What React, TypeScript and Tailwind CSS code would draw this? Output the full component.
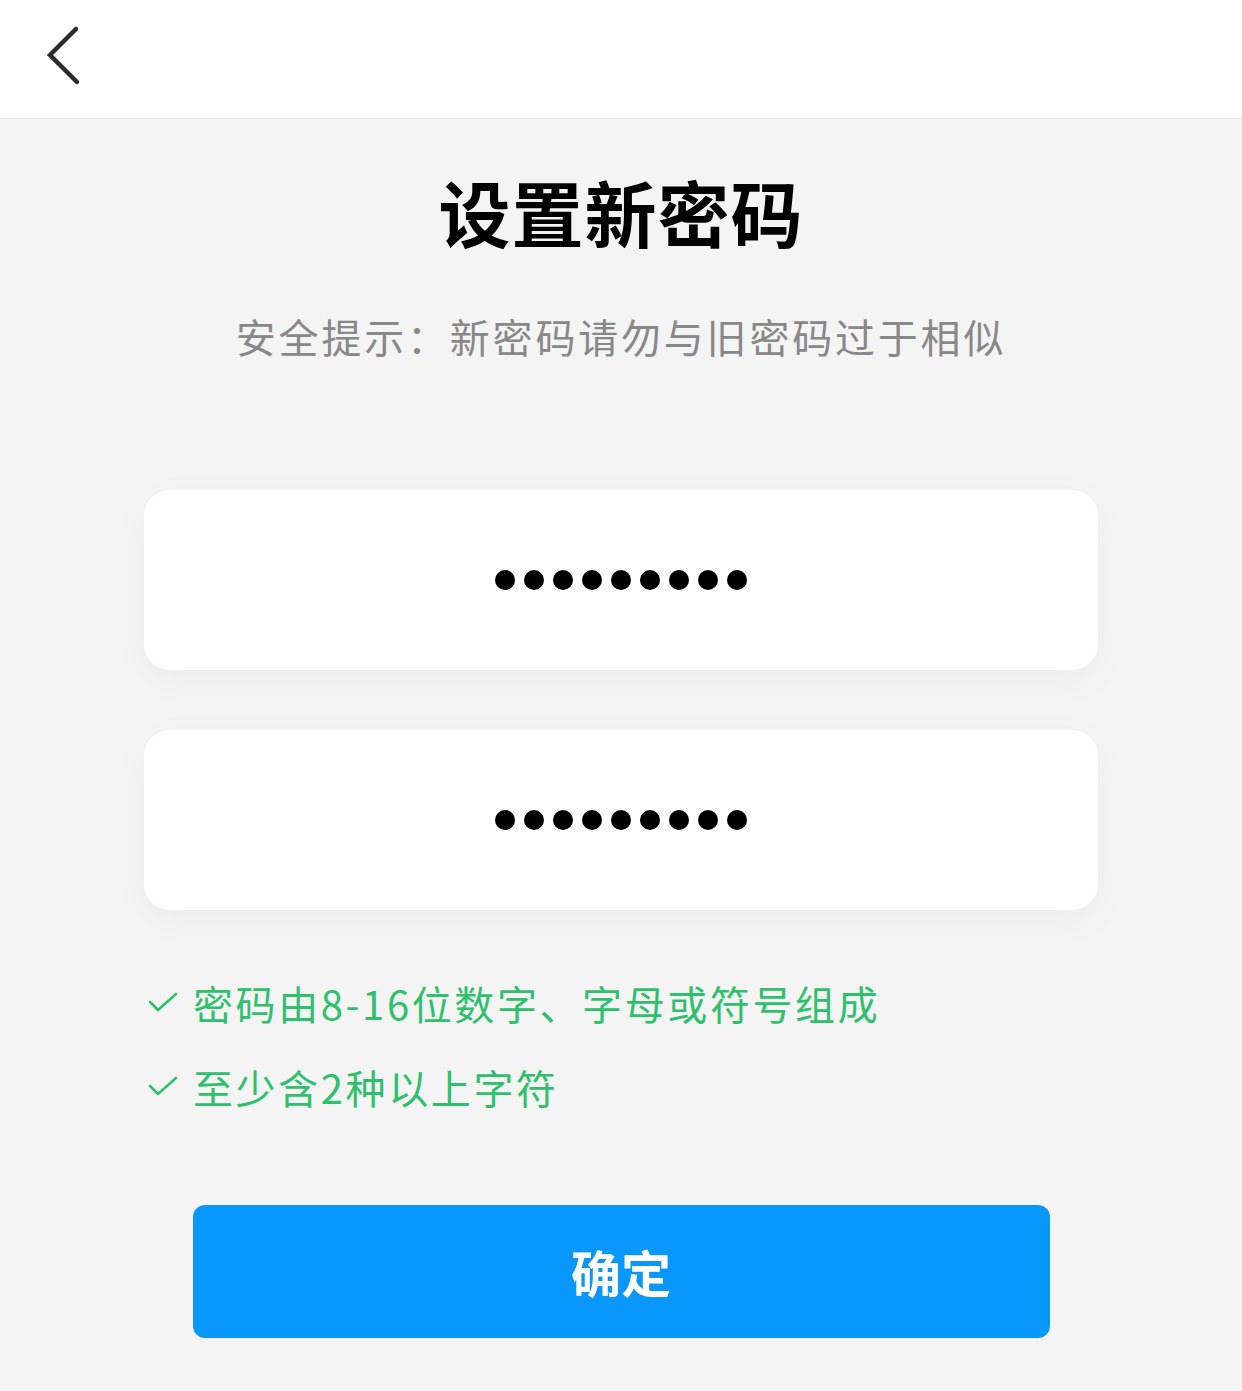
const font = { fontFamily: '"Noto Sans CJK SC", "Noto Sans", sans-serif' };

function Dots() {
  return (
    <div className="flex items-center gap-[9px]">
      {Array.from({ length: 9 }).map((_, i) => (
        <span key={i} className="block h-[20px] w-[20px] rounded-full bg-black" />
      ))}
    </div>
  );
}

function Rule({ text }: { text: string }) {
  return (
    <div className="flex h-[84px] items-center">
      <svg width="32" height="24" viewBox="0 0 32 24" className="ml-[3px] mr-[14px]">
        <polyline points="3,11 11,19 29,3" fill="none" stroke="#2fc06d" strokeWidth="2.6" strokeLinecap="round" strokeLinejoin="round" />
      </svg>
      <span className="text-[40px] leading-none tracking-[2.6px] text-[#2fc06d]">{text}</span>
    </div>
  );
}

export default function App() {
  return (
    <div className="min-h-[1391px] w-[1242px] bg-[#f4f4f4]" style={font}>
      <div className="flex h-[119px] items-center border-b border-[#e4e4e4] bg-white">
        <svg width="40" height="62" viewBox="0 0 40 62" className="ml-[44px] mb-[6px]">
          <polyline points="32,4 6,30 33,57" fill="none" stroke="#2b2b2b" strokeWidth="4.5" strokeLinecap="round" strokeLinejoin="miter" />
        </svg>
      </div>

      <h1 className="pt-[56px] text-center text-[72px] font-bold leading-none tracking-[1px] text-black">设置新密码</h1>
      <p className="mt-[69px] text-center text-[40px] leading-none tracking-[2.8px] text-[#888888]">安全提示：新密码请勿与旧密码过于相似</p>

      <div className="mt-[134px] flex flex-col gap-[60px] px-[144px]">
        <div className="flex h-[180px] items-center justify-center rounded-[26px] bg-white shadow-[0_10px_40px_rgba(0,0,0,0.035)]">
          <Dots />
        </div>
        <div className="flex h-[180px] items-center justify-center rounded-[26px] bg-white shadow-[0_10px_40px_rgba(0,0,0,0.035)]">
          <Dots />
        </div>
      </div>

      <div className="mt-[51px] px-[144px]">
        <Rule text="密码由8-16位数字、字母或符号组成" />
        <Rule text="至少含2种以上字符" />
      </div>

      <div className="mt-[76px] flex justify-center">
        <button className="flex h-[133px] w-[857px] items-center justify-center rounded-[12px] bg-[#0a97fc] text-[50px] font-bold text-white">
          确定
        </button>
      </div>
    </div>
  );
}
